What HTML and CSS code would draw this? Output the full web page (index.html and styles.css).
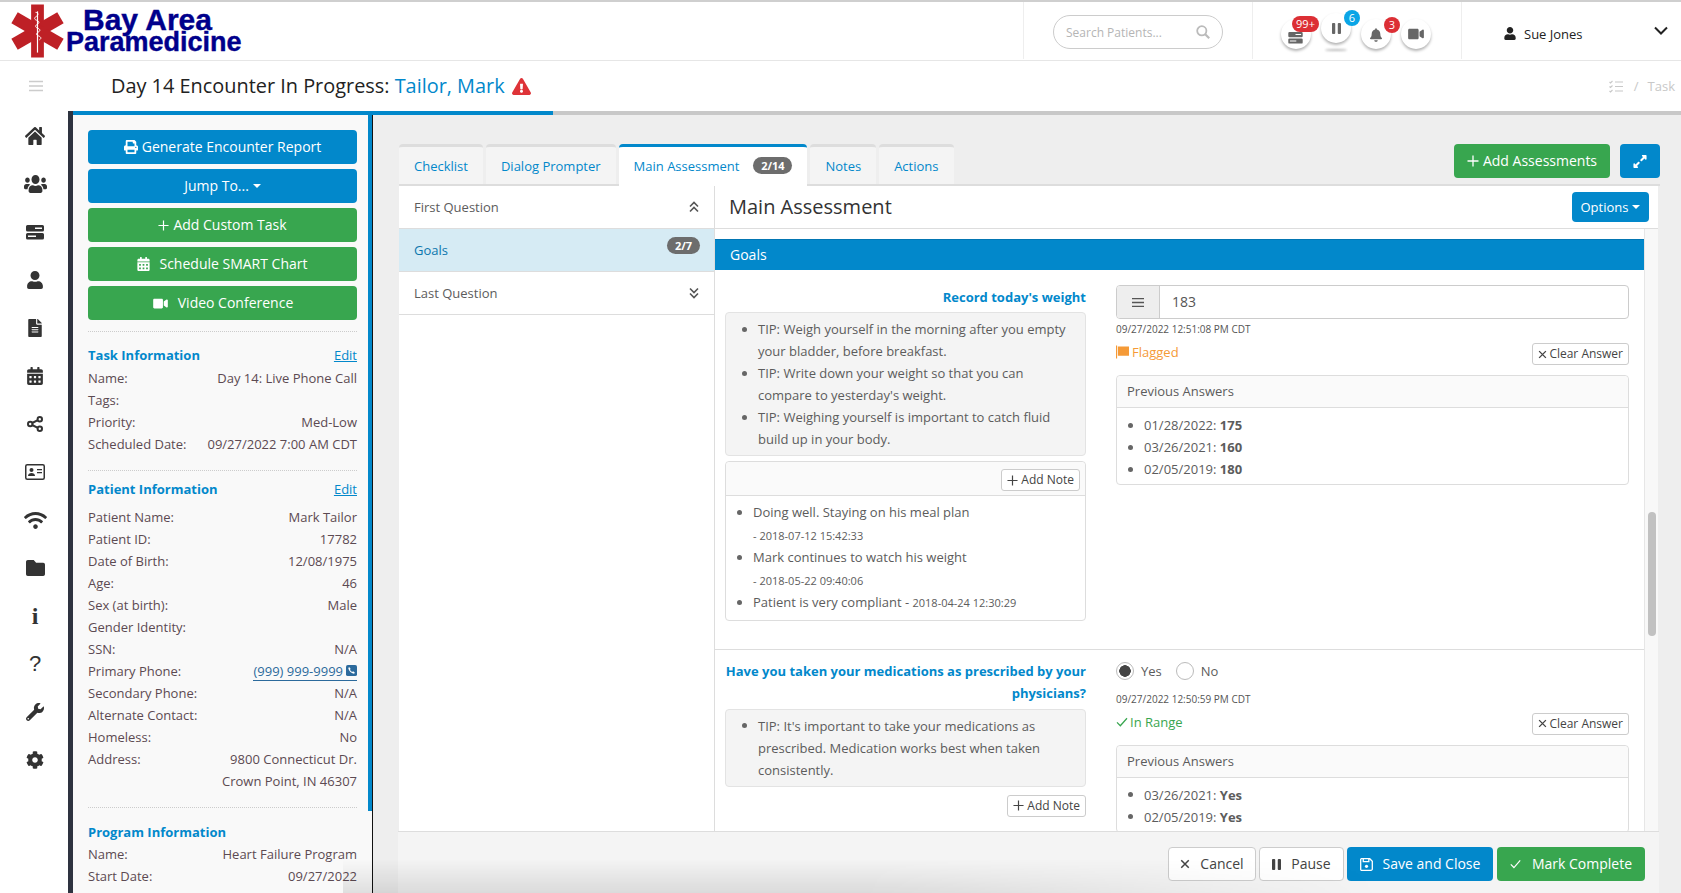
FILE: index.html
```html
<!DOCTYPE html>
<html lang="en">
<head>
<meta charset="utf-8">
<title>Bay Area Paramedicine</title>
<link rel="stylesheet" href="styles.css">
</head>
<body>
<svg class="sprite" aria-hidden="true">
  <symbol id="i-home" viewBox="0 32 576 448" preserveAspectRatio="none"><path d="M280.37 148.26L96 300.11V464a16 16 0 0 0 16 16l112.06-.29a16 16 0 0 0 15.92-16V368a16 16 0 0 1 16-16h64a16 16 0 0 1 16 16v95.64a16 16 0 0 0 16 16.05L464 480a16 16 0 0 0 16-16V300L295.67 148.26a12.19 12.19 0 0 0-15.3 0zM571.6 251.47L488 182.56V44.05a12 12 0 0 0-12-12h-56a12 12 0 0 0-12 12v72.61L318.47 43a48 48 0 0 0-61 0L4.34 251.47a12 12 0 0 0-1.6 16.9l25.5 31A12 12 0 0 0 45.15 301l235.22-193.74a12.19 12.19 0 0 1 15.3 0L530.9 301a12 12 0 0 0 16.9-1.6l25.5-31a12 12 0 0 0-1.7-16.93z"/></symbol>
  <symbol id="i-users" viewBox="0 32 640 448" preserveAspectRatio="none"><path d="M96 224c35.3 0 64-28.7 64-64s-28.7-64-64-64-64 28.7-64 64 28.7 64 64 64zm448 0c35.3 0 64-28.7 64-64s-28.7-64-64-64-64 28.7-64 64 28.7 64 64 64zm32 32h-64c-17.6 0-33.5 7.1-45.1 18.6 40.3 22.1 68.9 62 75.1 109.4h66c17.7 0 32-14.3 32-32v-32c0-35.3-28.7-64-64-64zm-256 0c61.9 0 112-50.1 112-112S381.9 32 320 32 208 82.1 208 144s50.1 112 112 112zm76.8 32h-8.3c-20.8 10-43.9 16-68.5 16s-47.6-6-68.5-16h-8.3C179.6 288 128 339.6 128 403.2V432c0 26.5 21.5 48 48 48h288c26.5 0 48-21.5 48-48v-28.8c0-63.6-51.6-115.2-115.2-115.2zm-223.7-13.4C161.5 263.1 145.6 256 128 256H64c-35.3 0-64 28.7-64 64v32c0 17.7 14.3 32 32 32h65.9c6.3-47.4 34.9-87.3 75.2-109.4z"/></symbol>
  <symbol id="i-server" viewBox="0 0 18 15"><path fill-rule="evenodd" d="M1.5 0h15A1.5 1.5 0 0 1 18 1.5v3.5A1.5 1.5 0 0 1 16.5 6.5h-15A1.5 1.5 0 0 1 0 5V1.5A1.5 1.5 0 0 1 1.5 0zM9 2.6v1.3h7V2.6zM1.5 8h15A1.5 1.5 0 0 1 18 9.5V13a1.5 1.5 0 0 1-1.5 1.5h-15A1.5 1.5 0 0 1 0 13V9.5A1.5 1.5 0 0 1 1.5 8zM2 10.6v1.3h8v-1.3z"/></symbol>
  <symbol id="i-user" viewBox="0 0 448 512"><path d="M224 256c70.7 0 128-57.3 128-128S294.7 0 224 0 96 57.3 96 128s57.3 128 128 128zm89.6 32h-16.7c-22.2 10.2-46.9 16-72.9 16s-50.6-5.8-72.9-16h-16.7C60.2 288 0 348.2 0 422.4V464c0 26.5 21.5 48 48 48h352c26.5 0 48-21.5 48-48v-41.6c0-74.2-60.2-134.4-134.4-134.4z"/></symbol>
  <symbol id="i-file" viewBox="0 0 384 512"><path d="M224 136V0H24C10.7 0 0 10.7 0 24v464c0 13.3 10.7 24 24 24h336c13.3 0 24-10.7 24-24V160H248c-13.2 0-24-10.8-24-24zm64 236c0 6.6-5.4 12-12 12H108c-6.6 0-12-5.4-12-12v-8c0-6.6 5.4-12 12-12h168c6.6 0 12 5.4 12 12v8zm0-64c0 6.6-5.4 12-12 12H108c-6.6 0-12-5.4-12-12v-8c0-6.6 5.4-12 12-12h168c6.6 0 12 5.4 12 12v8zm0-72v8c0 6.6-5.4 12-12 12H108c-6.6 0-12-5.4-12-12v-8c0-6.6 5.4-12 12-12h168c6.6 0 12 5.4 12 12zm96-114.1v6.1H256V0h6.1c6.4 0 12.5 2.5 17 7l97.9 98c4.5 4.5 7 10.6 7 16.9z"/></symbol>
  <symbol id="i-calendar" viewBox="0 0 448 512"><path d="M0 464c0 26.5 21.5 48 48 48h352c26.5 0 48-21.5 48-48V192H0v272zm320-196c0-6.6 5.4-12 12-12h40c6.6 0 12 5.4 12 12v40c0 6.6-5.4 12-12 12h-40c-6.6 0-12-5.4-12-12v-40zm0 128c0-6.6 5.4-12 12-12h40c6.6 0 12 5.4 12 12v40c0 6.6-5.4 12-12 12h-40c-6.6 0-12-5.4-12-12v-40zM192 268c0-6.6 5.4-12 12-12h40c6.6 0 12 5.4 12 12v40c0 6.6-5.4 12-12 12h-40c-6.6 0-12-5.4-12-12v-40zm0 128c0-6.6 5.4-12 12-12h40c6.6 0 12 5.4 12 12v40c0 6.6-5.4 12-12 12h-40c-6.6 0-12-5.4-12-12v-40zM64 268c0-6.6 5.4-12 12-12h40c6.6 0 12 5.4 12 12v40c0 6.6-5.4 12-12 12H76c-6.6 0-12-5.4-12-12v-40zm0 128c0-6.6 5.4-12 12-12h40c6.6 0 12 5.4 12 12v40c0 6.6-5.4 12-12 12H76c-6.6 0-12-5.4-12-12v-40zM400 64h-48V16c0-8.8-7.2-16-16-16h-32c-8.8 0-16 7.2-16 16v48H160V16c0-8.8-7.2-16-16-16h-32c-8.8 0-16 7.2-16 16v48H48C21.5 64 0 85.5 0 112v48h448v-48c0-26.5-21.5-48-48-48z"/></symbol>
  <symbol id="i-share" viewBox="0 0 16 16"><g fill="none" stroke="currentColor" stroke-width="2"><circle cx="12.8" cy="3.2" r="2.2"/><circle cx="3.2" cy="8" r="2.2"/><circle cx="12.8" cy="12.8" r="2.2"/><path d="M5.2 7l5.6-2.8M5.2 9l5.6 2.8"/></g></symbol>
  <symbol id="i-idcard" viewBox="0 0 20 16"><rect x=".75" y=".75" width="18.5" height="14.5" rx="1.5" fill="none" stroke="currentColor" stroke-width="1.5"/><circle cx="6.5" cy="6" r="2"/><path d="M3 12c0-2 1.5-3 3.5-3s3.5 1 3.5 3z"/><path d="M12 5h5v1.2h-5zM12 8h5v1.2h-5z"/></symbol>
  <symbol id="i-wifi" viewBox="0 32 640 448" preserveAspectRatio="none"><path d="M634.91 154.88C457.74-8.99 182.19-8.93 5.09 154.88c-6.66 6.16-6.79 16.59-.35 22.98l34.24 33.97c6.14 6.1 16.02 6.23 22.4.38 145.92-133.68 371.3-133.71 517.25 0 6.38 5.85 16.26 5.71 22.4-.38l34.24-33.97c6.43-6.39 6.3-16.82-.36-22.98zM320 352c-35.35 0-64 28.65-64 64s28.65 64 64 64 64-28.65 64-64-28.65-64-64-64zm202.67-83.59c-115.26-101.93-290.21-101.82-405.34 0-6.9 6.1-7.12 16.69-.57 23.15l34.44 33.99c6 5.92 15.66 6.32 22.05.8 83.95-72.57 209.74-72.41 293.49 0 6.39 5.52 16.05 5.13 22.05-.8l34.44-33.99c6.56-6.46 6.33-17.06-.56-23.15z"/></symbol>
  <symbol id="i-folder" viewBox="0 64 512 384" preserveAspectRatio="none"><path d="M464 128H272l-64-64H48C21.49 64 0 85.49 0 112v288c0 26.51 21.49 48 48 48h416c26.51 0 48-21.49 48-48V176c0-26.51-21.49-48-48-48z"/></symbol>
  <symbol id="i-wrench" viewBox="0 0 512 512"><path d="M507.73 109.1c-2.24-9.03-13.54-12.09-20.12-5.51l-74.36 74.36-67.88-11.31-11.31-67.88 74.36-74.36c6.62-6.62 3.43-17.9-5.66-20.16-47.38-11.74-99.55.91-136.58 37.93-39.64 39.64-50.55 97.1-34.05 147.2L18.74 402.76c-24.99 24.99-24.99 65.51 0 90.5 24.99 24.99 65.51 24.99 90.5 0l213.21-213.21c50.12 16.71 107.47 5.68 147.37-34.22 37.07-37.07 49.7-89.32 37.91-136.73zM64 472c-13.25 0-24-10.75-24-24 0-13.26 10.75-24 24-24s24 10.74 24 24c0 13.25-10.75 24-24 24z"/></symbol>
  <symbol id="i-cog" viewBox="0 0 512 512"><path d="M487.4 315.7l-42.6-24.6c4.3-23.2 4.3-47 0-70.2l42.6-24.6c4.9-2.8 7.1-8.6 5.5-14-11.1-35.6-30-67.8-54.7-94.6-3.8-4.1-10-5.1-14.8-2.3L380.8 110c-17.9-15.4-38.5-27.3-60.8-35.1V25.8c0-5.6-3.9-10.5-9.4-11.7-36.7-8.2-74.3-7.8-109.2 0-5.5 1.2-9.4 6.1-9.4 11.7V75c-22.2 7.9-42.8 19.8-60.8 35.1L88.7 85.5c-4.9-2.8-11-1.9-14.8 2.3-24.7 26.7-43.6 58.9-54.7 94.6-1.7 5.4.6 11.2 5.5 14L67.3 221c-4.3 23.2-4.3 47 0 70.2l-42.6 24.6c-4.9 2.8-7.1 8.6-5.5 14 11.1 35.6 30 67.8 54.7 94.6 3.8 4.1 10 5.1 14.8 2.3l42.6-24.6c17.9 15.4 38.5 27.3 60.8 35.1v49.2c0 5.6 3.9 10.5 9.4 11.7 36.7 8.2 74.3 7.8 109.2 0 5.5-1.2 9.4-6.1 9.4-11.7v-49.2c22.2-7.9 42.8-19.8 60.8-35.1l42.6 24.6c4.9 2.8 11 1.9 14.8-2.3 24.7-26.7 43.6-58.9 54.7-94.6 1.5-5.5-.7-11.3-5.6-14.1zM256 336c-44.1 0-80-35.9-80-80s35.9-80 80-80 80 35.9 80 80-35.9 80-80 80z"/></symbol>
  <symbol id="i-print" viewBox="0 0 512 512"><path d="M448 192V77.25c0-8.49-3.37-16.62-9.37-22.63L393.37 9.37c-6-6-14.14-9.37-22.63-9.37H96C78.33 0 64 14.33 64 32v160c-35.35 0-64 28.65-64 64v112c0 8.84 7.16 16 16 16h48v96c0 17.67 14.33 32 32 32h320c17.67 0 32-14.33 32-32v-96h48c8.84 0 16-7.16 16-16V256c0-35.35-28.65-64-64-64zm-64 256H128v-96h256v96zm0-224H128V64h192v48c0 8.84 7.16 16 16 16h48v96zm48 72c-13.25 0-24-10.75-24-24 0-13.27 10.75-24 24-24s24 10.73 24 24c0 13.25-10.75 24-24 24z"/></symbol>
  <symbol id="i-video" viewBox="0 0 576 512"><path d="M336.2 64H47.8C21.4 64 0 85.4 0 111.8v288.4C0 426.6 21.4 448 47.8 448h288.4c26.4 0 47.8-21.4 47.8-47.8V111.8c0-26.4-21.4-47.8-47.8-47.8zm189.4 37.7L416 177.3v157.4l109.6 75.5c21.2 14.6 50.4-.3 50.4-25.8V127.5c0-25.4-29.1-40.4-50.4-25.8z"/></symbol>
  <symbol id="i-bell" viewBox="0 0 448 512"><path d="M224 512c35.32 0 63.97-28.65 63.97-64H160.03c0 35.35 28.65 64 63.97 64zm215.39-149.71c-19.32-20.76-55.47-51.99-55.47-154.29 0-77.7-54.48-139.9-127.94-155.16V32c0-17.67-14.32-32-31.98-32s-31.98 14.33-31.98 32v20.84C118.56 68.1 64.08 130.3 64.08 208c0 102.3-36.15 133.53-55.47 154.29-6 6.45-8.66 14.16-8.61 21.71.11 16.4 12.98 32 32.1 32h383.8c19.12 0 32-15.6 32.1-32 .05-7.55-2.61-15.27-8.61-21.71z"/></symbol>
  <symbol id="i-warn" viewBox="0 0 576 512"><path d="M569.517 440.013C587.975 472.007 564.806 512 527.94 512H48.054c-36.937 0-59.999-40.055-41.577-71.987L246.423 24c18.467-32.009 64.72-31.951 83.154 0l239.94 416.013zM288 354c-25.405 0-46 20.595-46 46s20.595 46 46 46 46-20.595 46-46-20.595-46-46-46zm-43.673-165.346l7.418 136c.347 6.364 5.609 11.346 11.982 11.346h48.546c6.373 0 11.635-4.982 11.982-11.346l7.418-136c.375-6.874-5.098-12.654-11.982-12.654h-63.383c-6.884 0-12.356 5.78-11.981 12.654z"/></symbol>
  <symbol id="i-expand" viewBox="0 0 448 512"><path d="M212.686 315.314L120 408l32.922 31.029c15.12 15.12 4.412 40.971-16.97 40.971h-112C10.697 480 0 469.255 0 456V344c0-21.382 25.803-32.09 40.922-16.971L72 360l92.686-92.686c6.248-6.248 16.379-6.248 22.627 0l25.373 25.373c6.249 6.248 6.249 16.378 0 22.627zm22.628-118.628L328 104l-32.922-31.029C279.958 57.851 290.666 32 312.048 32h112C437.303 32 448 42.745 448 56v112c0 21.382-25.803 32.09-40.922 16.971L376 152l-92.686 92.686c-6.248 6.248-16.379 6.248-22.627 0l-25.373-25.373c-6.249-6.248-6.249-16.378 0-22.627z"/></symbol>
  <symbol id="i-plus" viewBox="0 0 12 12"><path d="M6 .5v11M.5 6h11" fill="none" stroke="currentColor" stroke-width="1.3"/></symbol>
  <symbol id="i-times" viewBox="0 0 12 12"><path d="M1.5 1.5l9 9M10.5 1.5l-9 9" fill="none" stroke="currentColor" stroke-width="1.8"/></symbol>
  <symbol id="i-check" viewBox="0 0 14 12"><path d="M1 6.5l4 4L13 1.5" fill="none" stroke="currentColor" stroke-width="1.5"/></symbol>
  <symbol id="i-bars" viewBox="0 0 14 12"><path d="M0 1.5h14M0 6h14M0 10.5h14" fill="none" stroke="currentColor" stroke-width="1.6"/></symbol>
  <symbol id="i-pause" viewBox="0 0 10 12"><rect width="3.6" height="12" rx="1"/><rect x="6.4" width="3.6" height="12" rx="1"/></symbol>
  <symbol id="i-save" viewBox="0 0 14 14"><path d="M1.5.75h9l2.75 2.75v8.25a1.5 1.5 0 0 1-1.5 1.5H1.5a1 1 0 0 1-.75-.75V1.5a1 1 0 0 1 .75-.75zM3.5 1v3h6V1" fill="none" stroke="currentColor" stroke-width="1.4"/><circle cx="7" cy="9" r="1.7"/></symbol>
  <symbol id="i-flag" viewBox="0 0 14 14"><path d="M0 0h1.2v14H0zM2 1h12v10H2z"/></symbol>
  <symbol id="i-up2" viewBox="0 0 12 12"><path d="M2 5.5l4-4 4 4M2 10.5l4-4 4 4" fill="none" stroke="currentColor" stroke-width="1.6"/></symbol>
  <symbol id="i-down2" viewBox="0 0 12 12"><path d="M2 1.5l4 4 4-4M2 6.5l4 4 4-4" fill="none" stroke="currentColor" stroke-width="1.6"/></symbol>
  <symbol id="i-chevron" viewBox="0 0 14 9"><path d="M1 1.5l6 6 6-6" fill="none" stroke="currentColor" stroke-width="2"/></symbol>
  <symbol id="i-search" viewBox="0 0 14 14"><circle cx="5.8" cy="5.8" r="4.6" fill="none" stroke="currentColor" stroke-width="1.8"/><path d="M9.2 9.2l4 4" fill="none" stroke="currentColor" stroke-width="2.2"/></symbol>
  <symbol id="i-tasks" viewBox="0 0 14 13"><path d="M6 2h8M6 6.5h8M6 11h8M.5 2l1 1 2-2M.5 6.5l1 1 2-2M.5 11l1 1 2-2" fill="none" stroke="currentColor" stroke-width="1.1"/></symbol>
  <symbol id="i-phone" viewBox="0 0 12 12"><rect width="12" height="12" rx="2"/><path d="M3.8 2.4l1.3 1.9-.8 1c.5 1 1.3 1.8 2.4 2.4l1-.8 1.9 1.3-.7 1.3C5.8 9.4 2.6 6.2 2.5 3.1z" fill="#fff"/></symbol>
  <symbol id="i-star" viewBox="0 0 54 54"><g fill="#be2026"><rect x="20.5" y="0" width="13" height="54"/><rect x="20.5" y="0" width="13" height="54" transform="rotate(60 27 27)"/><rect x="20.5" y="0" width="13" height="54" transform="rotate(-60 27 27)"/></g><path d="M27 7v42" stroke="#fff" stroke-width="1.2" fill="none"/><path d="M25 8c3 0 3 3 1 4s-3 3 0 4 3 3 1 4-3 3 0 4 3 3 1 4-3 3 0 4 3 3 1 4" stroke="#fff" stroke-width="1" fill="none"/></symbol>
</svg>

<div class="window-line"></div>

<header class="topbar">
  <div class="logo">
    <svg class="logo-star"><use href="#i-star"/></svg>
    <div class="logo-text">
      <span class="logo-bay">Bay Area</span>
      <span class="logo-para">Paramedicine</span>
    </div>
  </div>
  <div class="top-sec top-search">
    <div class="search-pill">
      <span class="search-text">Search Patients...</span>
      <svg class="ic-search"><use href="#i-search"/></svg>
    </div>
  </div>
  <div class="top-sec top-alerts">
    <div class="circle">
      <svg class="ic-server"><use href="#i-server"/></svg>
      <span class="badge badge-99">99+</span>
    </div>
    <div class="circle circle-up">
      <svg class="ic-cpause"><use href="#i-pause"/></svg>
      <span class="badge badge-6">6</span>
    </div>
    <div class="circle">
      <svg class="ic-bell"><use href="#i-bell"/></svg>
      <span class="badge badge-3">3</span>
    </div>
    <div class="circle">
      <svg class="ic-cvideo"><use href="#i-video"/></svg>
    </div>
  </div>
  <div class="top-sec top-user">
    <svg class="ic-user"><use href="#i-user"/></svg>
    <span class="user-name">Sue Jones</span>
    <svg class="ic-chevron"><use href="#i-chevron"/></svg>
  </div>
</header>

<div class="subbar">
  <svg class="ic-menu"><use href="#i-bars"/></svg>
  <h1 class="page-title">Day 14 Encounter In Progress: <a class="patient-link">Tailor, Mark</a></h1>
  <svg class="ic-warn"><use href="#i-warn"/></svg>
  <div class="crumbs">
    <svg class="ic-tasks"><use href="#i-tasks"/></svg>
    <span class="crumb-sep">/</span>
    <span>Task</span>
  </div>
</div>

<div class="body-row">
  <nav class="rail">
    <a class="rail-item"><svg class="ri-home"><use href="#i-home"/></svg></a>
    <a class="rail-item"><svg class="ri-users"><use href="#i-users"/></svg></a>
    <a class="rail-item"><svg class="ri-server"><use href="#i-server"/></svg></a>
    <a class="rail-item"><svg class="ri-user"><use href="#i-user"/></svg></a>
    <a class="rail-item"><svg class="ri-file"><use href="#i-file"/></svg></a>
    <a class="rail-item"><svg class="ri-cal"><use href="#i-calendar"/></svg></a>
    <a class="rail-item"><svg class="ri-share"><use href="#i-share"/></svg></a>
    <a class="rail-item"><svg class="ri-id"><use href="#i-idcard"/></svg></a>
    <a class="rail-item"><svg class="ri-wifi"><use href="#i-wifi"/></svg></a>
    <a class="rail-item"><svg class="ri-folder"><use href="#i-folder"/></svg></a>
    <a class="rail-item rail-glyph rail-info">i</a>
    <a class="rail-item rail-glyph">?</a>
    <a class="rail-item"><svg class="ri-wrench"><use href="#i-wrench"/></svg></a>
    <a class="rail-item"><svg class="ri-cog"><use href="#i-cog"/></svg></a>
  </nav>

  <div class="workspace">
    <div class="progress"><div class="progress-fill" style="width:480px"></div></div>
    <div class="work-row">
      <aside class="side">
        <div class="side-actions">
          <a class="btn btn-blue btn-block"><svg class="bi-print"><use href="#i-print"/></svg>Generate Encounter Report</a>
          <a class="btn btn-blue btn-block">Jump To...<i class="caret"></i></a>
          <a class="btn btn-green btn-block"><svg class="bi-plus"><use href="#i-plus"/></svg>Add Custom Task</a>
          <a class="btn btn-green btn-block"><svg class="bi-cal"><use href="#i-calendar"/></svg>Schedule SMART Chart</a>
          <a class="btn btn-green btn-block"><svg class="bi-video"><use href="#i-video"/></svg>Video Conference</a>
        </div>

        <section class="info info-task">
          <div class="info-head"><strong>Task Information</strong><a class="edit">Edit</a></div>
          <div class="info-row"><span>Name:</span><span>Day 14: Live Phone Call</span></div>
          <div class="info-row"><span>Tags:</span><span></span></div>
          <div class="info-row"><span>Priority:</span><span>Med-Low</span></div>
          <div class="info-row"><span>Scheduled Date:</span><span>09/27/2022 7:00 AM CDT</span></div>
        </section>

        <section class="info info-patient">
          <div class="info-head"><strong>Patient Information</strong><a class="edit">Edit</a></div>
          <div class="info-row"><span>Patient Name:</span><span>Mark Tailor</span></div>
          <div class="info-row"><span>Patient ID:</span><span>17782</span></div>
          <div class="info-row"><span>Date of Birth:</span><span>12/08/1975</span></div>
          <div class="info-row"><span>Age:</span><span>46</span></div>
          <div class="info-row"><span>Sex (at birth):</span><span>Male</span></div>
          <div class="info-row"><span>Gender Identity:</span><span></span></div>
          <div class="info-row"><span>SSN:</span><span>N/A</span></div>
          <div class="info-row"><span>Primary Phone:</span><a class="phone">(999) 999-9999<svg class="ic-phone"><use href="#i-phone"/></svg></a></div>
          <div class="info-row"><span>Secondary Phone:</span><span>N/A</span></div>
          <div class="info-row"><span>Alternate Contact:</span><span>N/A</span></div>
          <div class="info-row"><span>Homeless:</span><span>No</span></div>
          <div class="info-row"><span>Address:</span><span class="addr">9800 Connecticut Dr.<br>Crown Point, IN 46307</span></div>
        </section>

        <section class="info info-program">
          <div class="info-head"><strong>Program Information</strong></div>
          <div class="info-row"><span>Name:</span><span>Heart Failure Program</span></div>
          <div class="info-row"><span>Start Date:</span><span>09/27/2022</span></div>
        </section>
      </aside>

      <main class="content">
        <div class="tabs-row">
          <a class="tab">Checklist</a>
          <a class="tab">Dialog Prompter</a>
          <a class="tab tab-active">Main Assessment<span class="pill pill-tab">2/14</span></a>
          <a class="tab">Notes</a>
          <a class="tab">Actions</a>
          <div class="tabs-actions">
            <a class="btn btn-green btn-add"><svg class="bi-plus"><use href="#i-plus"/></svg>Add Assessments</a>
            <a class="btn btn-blue btn-expand"><svg class="bi-expand"><use href="#i-expand"/></svg></a>
          </div>
        </div>

        <div class="panel">
          <div class="qlist">
            <div class="qitem"><span>First Question</span><svg class="ic-dbl"><use href="#i-up2"/></svg></div>
            <div class="qitem qitem-active"><span>Goals</span><span class="pill pill-list">2/7</span></div>
            <div class="qitem"><span>Last Question</span><svg class="ic-dbl"><use href="#i-down2"/></svg></div>
          </div>
          <div class="assess">
            <div class="assess-head">
              <h2 class="assess-title">Main Assessment</h2>
              <a class="btn btn-blue btn-options">Options<i class="caret"></i></a>
            </div>
            <div class="assess-body">
              <div class="assess-scroll">
                <div class="group-bar">Goals</div>

                <div class="question q-first">
                  <div class="q-left">
                    <div class="q-label">Record today's weight</div>
                    <div class="tips">
                      <ul class="dots">
                        <li>TIP: Weigh yourself in the morning after you empty your bladder, before breakfast.</li>
                        <li>TIP: Write down your weight so that you can compare to yesterday's weight.</li>
                        <li>TIP: Weighing yourself is important to catch fluid build up in your body.</li>
                      </ul>
                    </div>
                    <div class="notes">
                      <div class="notes-head"><a class="btn-mini"><svg class="mi-plus"><use href="#i-plus"/></svg>Add Note</a></div>
                      <ul class="dots notes-list">
                        <li>Doing well. Staying on his meal plan<br><small>- 2018-07-12 15:42:33</small></li>
                        <li>Mark continues to watch his weight<br><small>- 2018-05-22 09:40:06</small></li>
                        <li>Patient is very compliant - <small>2018-04-24 12:30:29</small></li>
                      </ul>
                    </div>
                  </div>
                  <div class="q-right">
                    <div class="input-group">
                      <span class="addon"><svg class="ic-addon"><use href="#i-bars"/></svg></span>
                      <span class="input-value">183</span>
                    </div>
                    <div class="stamp stamp-input">09/27/2022 12:51:08 PM CDT</div>
                    <div class="status-row">
                      <span class="status status-flag"><svg class="ic-flag"><use href="#i-flag"/></svg>Flagged</span>
                      <a class="btn-mini"><svg class="mi-times"><use href="#i-times"/></svg>Clear Answer</a>
                    </div>
                    <div class="prev">
                      <div class="prev-head">Previous Answers</div>
                      <ul class="dots prev-list">
                        <li>01/28/2022: <b>175</b></li>
                        <li>03/26/2021: <b>160</b></li>
                        <li>02/05/2019: <b>180</b></li>
                      </ul>
                    </div>
                  </div>
                </div>

                <div class="question q-second">
                  <div class="q-left">
                    <div class="q-label">Have you taken your medications as prescribed by your physicians?</div>
                    <div class="tips">
                      <ul class="dots">
                        <li>TIP: It's important to take your medications as prescribed. Medication works best when taken consistently.</li>
                      </ul>
                    </div>
                    <div class="note-action"><a class="btn-mini"><svg class="mi-plus"><use href="#i-plus"/></svg>Add Note</a></div>
                  </div>
                  <div class="q-right">
                    <div class="radios">
                      <span class="radio radio-on"></span><span class="radio-label">Yes</span>
                      <span class="radio"></span><span class="radio-label">No</span>
                    </div>
                    <div class="stamp stamp-radio">09/27/2022 12:50:59 PM CDT</div>
                    <div class="status-row">
                      <span class="status status-ok"><svg class="ic-ok"><use href="#i-check"/></svg>In Range</span>
                      <a class="btn-mini"><svg class="mi-times"><use href="#i-times"/></svg>Clear Answer</a>
                    </div>
                    <div class="prev">
                      <div class="prev-head">Previous Answers</div>
                      <ul class="dots prev-list">
                        <li>03/26/2021: <b>Yes</b></li>
                        <li>02/05/2019: <b>Yes</b></li>
                      </ul>
                    </div>
                  </div>
                </div>
              </div>
              <div class="track"><div class="thumb"></div></div>
            </div>
          </div>
        </div>

        <footer class="actions">
          <a class="btn btn-white btn-cancel"><svg class="fi-times"><use href="#i-times"/></svg>Cancel</a>
          <a class="btn btn-white btn-pause"><svg class="fi-pause"><use href="#i-pause"/></svg>Pause</a>
          <a class="btn btn-blue btn-save"><svg class="fi-save"><use href="#i-save"/></svg>Save and Close</a>
          <a class="btn btn-green btn-complete"><svg class="fi-check"><use href="#i-check"/></svg>Mark Complete</a>
        </footer>
      </main>
    </div>
  </div>
</div>
</body>
</html>
```

FILE: styles.css
```css
* { box-sizing: border-box; }
html, body { margin: 0; padding: 0; }
body {
  width: 1681px;
  height: 893px;
  overflow: hidden;
  display: flex;
  flex-direction: column;
  background: #fff;
  font-family: "Open Sans", "Noto Sans", sans-serif;
  font-size: 13px;
  line-height: 22px;
  color: #5c5c5c;
}
a { text-decoration: none; color: inherit; }
ul { margin: 0; }
svg { fill: currentColor; flex: none; display: block; }
.sprite { position: absolute; width: 0; height: 0; overflow: hidden; }

.window-line { height: 2px; background: #cfcfcf; flex: none; }

/* top bar */
.topbar { height: 59px; flex: none; display: flex; border-bottom: 1px solid #e6e6e6; }
.logo { flex: 1; display: flex; padding: 2px 0 0 11px; }
.logo-star { width: 53px; height: 54px; }
.logo-text { display: flex; flex-direction: column; color: #00008b; font-family: "Liberation Sans", Arial, sans-serif; font-weight: 700; -webkit-text-stroke: .4px #00008b; margin-left: 2px; padding-top: 5px; }
.logo-bay { font-size: 30px; line-height: 22px; margin-left: 17px; }
.logo-para { font-size: 27px; line-height: 22px; }

.top-sec { border-left: 1px solid #eee; height: 57px; flex: none; }
.top-search { width: 229px; padding: 13px 0 0 29px; }
.search-pill { width: 170px; height: 34px; border: 1px solid #ccc; border-radius: 17px; display: flex; align-items: center; padding: 0 12px; justify-content: space-between; color: #b5b5b5; font-size: 12px; }
.search-text { padding-top: 1px; }
.ic-search { width: 14px; height: 14px; color: #bbb; }

.top-alerts { width: 209px; display: flex; align-items: flex-start; gap: 10px; padding: 17px 0 0 28px; }
.circle { position: relative; width: 30px; height: 30px; border-radius: 50%; background: #fff; box-shadow: 0 2px 3px rgba(0,0,0,.3); display: flex; align-items: center; justify-content: center; color: #666; }
.circle-up { margin-top: -6px; }
.circle-up::after { content: ""; position: absolute; left: 4px; bottom: -8px; width: 22px; height: 2px; border-radius: 50%; background: #bbb; filter: blur(1px); }
.ic-server { width: 15px; height: 12px; margin-top: 8px; margin-left: -2px; }
.ic-cpause { width: 9px; height: 11px; }
.ic-bell { width: 12px; height: 14px; margin-top: 2px; }
.ic-cvideo { width: 16px; height: 14px; }
.badge { position: absolute; color: #fff; font-size: 11px; line-height: 16px; text-align: center; border-radius: 8px; height: 16px; }
.badge-99 { left: 11px; top: -3px; width: 27px; background: #dc2f35; }
.badge-6 { left: 23px; top: -3px; width: 16px; background: #0ba5e6; }
.badge-3 { left: 23px; top: -2px; width: 16px; background: #dc2f35; }

.top-user { width: 220px; display: flex; align-items: center; padding: 6px 0 0 42px; color: #222; }
.ic-user { width: 12px; height: 13px; color: #222; }
.user-name { margin-left: 8px; flex: 1; }
.ic-chevron { width: 14px; height: 9px; margin: -6px 13px 0 0; color: #222; }

/* sub bar */
.subbar { height: 50px; flex: none; display: flex; align-items: center; padding-left: 29px; }
.ic-menu { width: 14px; height: 12px; color: #ccc; }
.page-title { margin: 0 0 0 68px; font-size: 19.9px; font-weight: 400; color: #222; line-height: 30px; }
.patient-link { color: #0288cb; }
.ic-warn { width: 19px; height: 17px; color: #de3338; margin-left: 7px; }
.crumbs { margin-left: auto; display: flex; align-items: center; color: #c8c8c8; padding-right: 6px; }
.ic-tasks { width: 14px; height: 13px; }
.crumb-sep { margin: 0 9px 0 11px; }

/* body */
.body-row { flex: 1; display: flex; min-height: 0; }
.rail { width: 68px; flex: none; padding: 1px 0 0 2px; background: #fff; }
.rail-item { height: 48px; display: flex; align-items: center; justify-content: center; color: #333; }
.rail-glyph { font-size: 22px; font-family: "Liberation Sans", sans-serif; }
.rail-info { font-weight: 700; font-family: "Liberation Serif", serif; font-size: 24px; }
.ri-home { width: 20px; height: 18px; }
.ri-users { width: 23px; height: 18px; }
.ri-server { width: 18px; height: 15px; }
.ri-user { width: 16px; height: 18px; }
.ri-file { width: 14px; height: 18px; }
.ri-cal { width: 16px; height: 18px; }
.ri-share { width: 16px; height: 16px; }
.ri-id { width: 20px; height: 16px; }
.ri-wifi { width: 23px; height: 17px; }
.ri-folder { width: 19px; height: 16px; }
.ri-wrench { width: 18px; height: 18px; }
.ri-cog { width: 18px; height: 18px; }

.workspace { flex: 1; min-width: 0; display: flex; flex-direction: column; border-left: 5px solid #2e3340; }
.progress { height: 4px; flex: none; background: #c8c8c8; }
.progress-fill { height: 4px; background: #0288cb; }
.work-row { flex: 1; display: flex; min-height: 0; }

/* side panel */
.side { width: 300px; flex: none; overflow: hidden; padding: 15px 15px 0 15px; border-right: 1px solid #111; background: linear-gradient(#0288cb,#0288cb) right top / 4px 696px no-repeat, #f9f9f9; color: #5c4a52; }
.side-actions { display: flex; flex-direction: column; gap: 5px; padding-bottom: 11px; border-bottom: 1px dotted #ccc; }
.btn { display: flex; align-items: center; justify-content: center; border-radius: 4px; color: #fff; font-size: 14px; height: 34px; }
.btn-blue { background: #0288cb; }
.btn-green { background: #38a64f; }
.btn-white { background: #fff; border: 1px solid #ccc; color: #444; }
.btn-block { width: 100%; }
.bi-print { width: 14px; height: 14px; margin-right: 4px; }
.bi-plus { width: 11px; height: 11px; margin-right: 4px; }
.bi-cal { width: 13px; height: 14px; margin-right: 9px; }
.bi-video { width: 17px; height: 13px; margin-right: 9px; }
.caret { display: inline-block; width: 0; height: 0; margin-left: 4px; border-left: 4px solid transparent; border-right: 4px solid transparent; border-top: 4px solid #fff; }

.info { border-bottom: 1px dotted #ccc; padding-bottom: 15px; }
.info-program { border-bottom: 0; }
.info-head { display: flex; justify-content: space-between; }
.info-head strong { color: #0288cb; font-weight: 700; }
.edit { color: #0288cb; text-decoration: underline; }
.info-task .info-head { margin: 12px 0 1px; }
.info-patient .info-head { margin: 7px 0 6px; }
.info-program .info-head { margin: 13px 0 0; }
.info-row { display: flex; justify-content: space-between; text-align: right; }
.info-row > span:first-child { text-align: left; }
.phone { display: flex; align-items: center; color: #2c6a9c; border-bottom: 1px solid #2c6a9c; height: 20px; margin-top: 1px; }
.ic-phone { width: 11px; height: 11px; margin-left: 3px; color: #2c6a9c; }

/* content */
.content { flex: 1; min-width: 0; position: relative; display: flex; flex-direction: column; background: #eee; padding: 29px 21px 0 26px; }
.content::after { content: ""; position: absolute; left: -30px; right: 300px; bottom: 0; height: 34px; background: linear-gradient(transparent, rgba(0,0,0,.1)); -webkit-mask-image: linear-gradient(to right, #000 50%, transparent); mask-image: linear-gradient(to right, #000 50%, transparent); pointer-events: none; }
.tabs-row { flex: none; height: 42px; display: flex; align-items: flex-start; gap: 2px; border-bottom: 2px solid #ddd; }
.tab { height: 40px; padding: 0 15px; display: flex; align-items: center; background: #f4f4f4; border-top: 3px solid #ddd; border-radius: 4px 4px 0 0; color: #0288cb; margin-right: 1px; }
.tab-active { height: 42px; background: #fff; border-top-color: #0288cb; padding-bottom: 2px; }
.pill { display: inline-block; background: #6d6d6d; color: #fff; font-weight: 700; font-size: 11px; border-radius: 9px; height: 17px; line-height: 17px; text-align: center; }
.pill-tab { width: 39px; margin-left: 14px; }
.pill-list { width: 33px; margin-top: -10px; }
.tabs-actions { margin-left: auto; display: flex; gap: 10px; }
.btn-add { width: 156px; }
.btn-add .bi-plus { width: 12px; height: 12px; }
.btn-expand { width: 40px; }
.bi-expand { width: 14px; height: 15px; }

.panel { flex: 1; min-height: 0; display: flex; margin-right: 2px; background: #fff; }
.qlist { width: 315px; flex: none; }
.qitem { height: 43px; padding: 0 14px 0 15px; display: flex; align-items: center; justify-content: space-between; border-bottom: 1px solid #ddd; }
.qitem-active { background: #d6ebf4; color: #0b76ad; }
.ic-dbl { width: 12px; height: 12px; color: #555; }

.assess { flex: 1; min-width: 0; display: flex; flex-direction: column; border-left: 1px solid #ddd; }
.assess-head { height: 43px; flex: none; display: flex; align-items: center; justify-content: space-between; padding: 0 9px 0 14px; border-bottom: 1px solid #ddd; }
.assess-title { margin: 0; font-size: 20px; font-weight: 400; color: #333; line-height: 30px; }
.btn-options { width: 77px; height: 30px; font-size: 13px; }
.assess-body { flex: 1; min-height: 0; display: flex; }
.assess-scroll { flex: 1; min-width: 0; overflow: hidden; padding-top: 10px; }
.track { width: 14px; flex: none; background: #f8f8f8; border-left: 1px solid #e6e6e6; padding: 283px 0 0 3px; }
.thumb { width: 8px; height: 124px; border-radius: 4px; background: #c1c1c1; }
.group-bar { height: 31px; background: #0288cb; border-top: 1px solid #0276b3; color: #fff; font-size: 14px; line-height: 30px; padding-left: 15px; }

.question { display: grid; grid-template-columns: 361px 513px; column-gap: 30px; padding: 0 15px 0 10px; }
.q-first { padding-top: 15px; padding-bottom: 28px; border-bottom: 1px solid #ddd; }
.q-second { padding-top: 10px; }
.q-label { text-align: right; font-weight: 700; color: #0288cb; margin-bottom: 4px; }
.q-first .q-label { margin-top: 1px; }
.q-second .q-label { margin-bottom: 5px; }
.tips { background: #f4f4f4; border: 1px solid #e3e3e3; border-radius: 4px; padding: 5px 10px 5px 0; }
.dots { list-style: none; padding-left: 32px; }
.dots li { position: relative; }
.dots li::before { content: ""; position: absolute; left: -16.5px; top: 8.5px; width: 5px; height: 5px; border-radius: 50%; background: #666; }
.notes { margin-top: 5px; border: 1px solid #ddd; border-radius: 4px; }
.notes-head { height: 34px; background: #fafafa; border-bottom: 1px solid #ddd; border-radius: 4px 4px 0 0; display: flex; justify-content: flex-end; align-items: flex-start; padding: 7px 5px 0 0; }
.btn-mini { display: flex; align-items: center; height: 22px; padding: 0 5px; background: #fff; border: 1px solid #ccc; border-radius: 3px; color: #444; font-size: 12px; }
.mi-plus { width: 11px; height: 11px; margin-right: 3px; }
.mi-times { width: 9px; height: 9px; margin-right: 2px; }
.notes-list { padding: 5px 8px 6px 27px; }
.notes-list li { line-height: 22.5px; }
.notes-list small { font-size: 11px; line-height: 1; }
.note-action { display: flex; justify-content: flex-end; margin-top: 8px; }

.input-group { height: 34px; display: flex; border: 1px solid #ccc; border-radius: 4px; overflow: hidden; }
.addon { width: 43px; background: #eee; border-right: 1px solid #ccc; display: flex; align-items: center; justify-content: center; color: #555; }
.ic-addon { width: 12px; height: 11px; }
.input-value { font-size: 14px; line-height: 32px; padding-left: 12px; color: #555; }
.stamp { line-height: 16px; color: #555; font-size: 10px; }
.stamp-input { margin-top: 2px; }
.stamp-radio { margin-top: 9px; }
.status-row { display: flex; justify-content: space-between; margin-top: 6px; }
.status { display: flex; align-items: center; height: 18px; }
.status-flag { color: #f59a37; }
.status-ok { color: #38a64f; }
.ic-flag { width: 13px; height: 14px; margin-right: 3px; }
.ic-ok { width: 12px; height: 10px; margin-right: 2px; }
.prev { margin-top: 10px; border: 1px solid #ddd; border-radius: 4px; }
.prev-head { height: 32px; line-height: 31px; padding-left: 10px; background: #fafafa; border-bottom: 1px solid #ddd; border-radius: 4px 4px 0 0; }
.prev-list { padding: 6px 8px 4px 27px; }
.radios { display: flex; align-items: center; height: 22px; }
.radio { width: 18px; height: 18px; border-radius: 50%; border: 1px solid #bbb; background: #fff; display: block; flex: none; }
.radio-on { background: radial-gradient(circle, #444 0 5.5px, #fff 6px); }
.radio-label { margin: 0 14px 0 7px; }

/* footer */
.actions { flex: none; height: 62px; margin: 0 1px 0 -1px; padding: 15px 14px 0 0; background: #f4f4f4; border-top: 1px solid #ddd; display: flex; justify-content: flex-end; gap: 3px; }
.btn-cancel { width: 88px; }
.btn-pause { width: 85px; }
.btn-save { width: 146px; }
.btn-complete { width: 148px; margin-left: 1px; }
.fi-times { width: 10px; height: 10px; margin-right: 10px; }
.fi-pause { width: 9px; height: 11px; margin-right: 10px; }
.fi-save { width: 13px; height: 13px; margin-right: 10px; }
.fi-check { width: 11px; height: 10px; margin-right: 11px; }
```
